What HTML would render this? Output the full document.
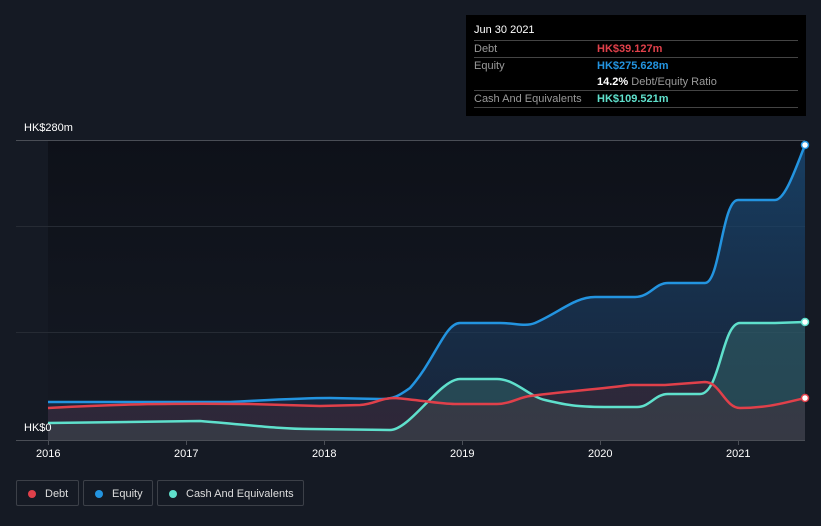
<!DOCTYPE html><html><head><style>
body{margin:0;width:821px;height:526px;background:#151a24;font-family:"Liberation Sans",sans-serif;overflow:hidden;position:relative}
.t{position:absolute;color:#fff;font-size:11px}
.tip{position:absolute;left:466px;top:15px;width:340px;height:101px;background:#000;font-size:11px;color:#9a9a9a}
.row{position:absolute;left:8px;width:324px;border-top:1px solid #444;height:17px;line-height:17px}
.leg{position:absolute;top:480px;height:26px;border:1px solid #3c4048;border-radius:2px;color:#ddd;font-size:11px;line-height:26px;box-sizing:border-box}
.leg i{position:absolute;left:11px;top:9px;width:8px;height:8px;border-radius:50%}
</style></head><body>
<svg width="821" height="526" style="position:absolute;left:0;top:0">
<defs><linearGradient id="g" x1="0" y1="0" x2="0" y2="1"><stop offset="0" stop-color="#0e1119"/><stop offset="1" stop-color="#151a24"/></linearGradient>
<linearGradient id="eq" x1="0" y1="0" x2="0" y2="1"><stop offset="0" stop-color="#1a4a75" stop-opacity=".8"/><stop offset="1" stop-color="#1a3050" stop-opacity=".5"/></linearGradient></defs>
<rect x="48" y="140" width="757" height="300" fill="url(#g)"/>
<line x1="16" y1="140.5" x2="805" y2="140.5" stroke="#4a4e56"/>
<line x1="16" y1="226.5" x2="805" y2="226.5" stroke="#262b34"/>
<line x1="16" y1="332.5" x2="805" y2="332.5" stroke="#262b34"/>
<path d="M48 402 L230 402 C270 400 300 398 330 398 L380 399 C395 399 400 395 410 388 C435 360 445 323 460 323 L500 323 C515 323 525 327 535 323 C560 312 575 297 595 297 L635 297 C650 297 655 283 668 283 L705 283 C720 283 722 200 738 200 L775 200 C785 200 795 170 805 145 L805 440 L48 440Z" fill="url(#eq)"/>
<path d="M48 423 L200 421 C250 425 280 429 310 429 L390 430 C410 430 440 379 460 379 L497 379 C515 379 530 397 545 400 C570 406 580 407 610 407 L637 407 C650 407 655 394 668 394 L700 394 C720 394 722 323 740 323 L775 323 L805 322 L805 440 L48 440Z" fill="#3a6e6e" fill-opacity=".45"/>
<path d="M48 408 C100 405 150 403 250 404 L320 406 L360 405 C375 404 380 398 395 398 C420 400 440 404 455 404 L497 404 C510 404 520 397 530 396 C560 392 600 389 630 385 L665 385 L705 382 C720 382 725 408 740 408 C765 408 780 404 805 398 L805 440 L48 440Z" fill="#4a2a35" fill-opacity=".45"/>
<g fill="none" stroke-width="2.5">
<path d="M48 402 L230 402 C270 400 300 398 330 398 L380 399 C395 399 400 395 410 388 C435 360 445 323 460 323 L500 323 C515 323 525 327 535 323 C560 312 575 297 595 297 L635 297 C650 297 655 283 668 283 L705 283 C720 283 722 200 738 200 L775 200 C785 200 795 170 805 145" stroke="#2394e0"/>
<path d="M48 423 L200 421 C250 425 280 429 310 429 L390 430 C410 430 440 379 460 379 L497 379 C515 379 530 397 545 400 C570 406 580 407 610 407 L637 407 C650 407 655 394 668 394 L700 394 C720 394 722 323 740 323 L775 323 L805 322" stroke="#5fe0cc"/>
<path d="M48 408 C100 405 150 403 250 404 L320 406 L360 405 C375 404 380 398 395 398 C420 400 440 404 455 404 L497 404 C510 404 520 397 530 396 C560 392 600 389 630 385 L665 385 L705 382 C720 382 725 408 740 408 C765 408 780 404 805 398" stroke="#e0404a"/>
</g>
<circle cx="805" cy="145" r="3.5" fill="#fff" stroke="#2394e0" stroke-width="1.5"/>
<circle cx="805" cy="322" r="3.5" fill="#fff" stroke="#5fe0cc" stroke-width="1.5"/>
<circle cx="805" cy="398" r="3.5" fill="#fff" stroke="#e0404a" stroke-width="1.5"/>
<line x1="16" y1="440.5" x2="805" y2="440.5" stroke="#4a4e56"/>
<g stroke="#4a4e56"><line x1="48.5" y1="440" x2="48.5" y2="445"/><line x1="186.5" y1="440" x2="186.5" y2="445"/><line x1="324.5" y1="440" x2="324.5" y2="445"/><line x1="462.5" y1="440" x2="462.5" y2="445"/><line x1="600.5" y1="440" x2="600.5" y2="445"/><line x1="738.5" y1="440" x2="738.5" y2="445"/></g>
</svg>
<div class="t" style="left:24px;top:122px">HK$280m</div>
<div class="t" style="left:24px;top:422px">HK$0</div>
<div class="t" style="left:36px;top:448px">2016</div>
<div class="t" style="left:174px;top:448px">2017</div>
<div class="t" style="left:312px;top:448px">2018</div>
<div class="t" style="left:450px;top:448px">2019</div>
<div class="t" style="left:588px;top:448px">2020</div>
<div class="t" style="left:726px;top:448px">2021</div>
<div class="tip">
<div style="position:absolute;left:8px;top:9px;color:#fff">Jun 30 2021</div>
<div class="row" style="top:25px">Debt<span style="position:absolute;left:123px;color:#e0404a;font-weight:bold">HK$39.127m</span></div>
<div class="row" style="top:42px">Equity<span style="position:absolute;left:123px;color:#2394e0;font-weight:bold">HK$275.628m</span></div>
<div style="position:absolute;left:131px;top:59px;line-height:17px"><b style="color:#fff">14.2%</b> Debt/Equity Ratio</div>
<div class="row" style="top:75px">Cash And Equivalents<span style="position:absolute;left:123px;color:#5fe0cc;font-weight:bold">HK$109.521m</span></div>
<div class="row" style="top:92px;height:0"></div>
</div>
<div class="leg" style="left:16px;width:63px"><i style="background:#e0404a"></i><span style="position:absolute;left:28px">Debt</span></div>
<div class="leg" style="left:83px;width:70px"><i style="background:#2394e0"></i><span style="position:absolute;left:28px">Equity</span></div>
<div class="leg" style="left:157px;width:147px"><i style="background:#5fe0cc"></i><span style="position:absolute;left:28px">Cash And Equivalents</span></div>
</body></html>
